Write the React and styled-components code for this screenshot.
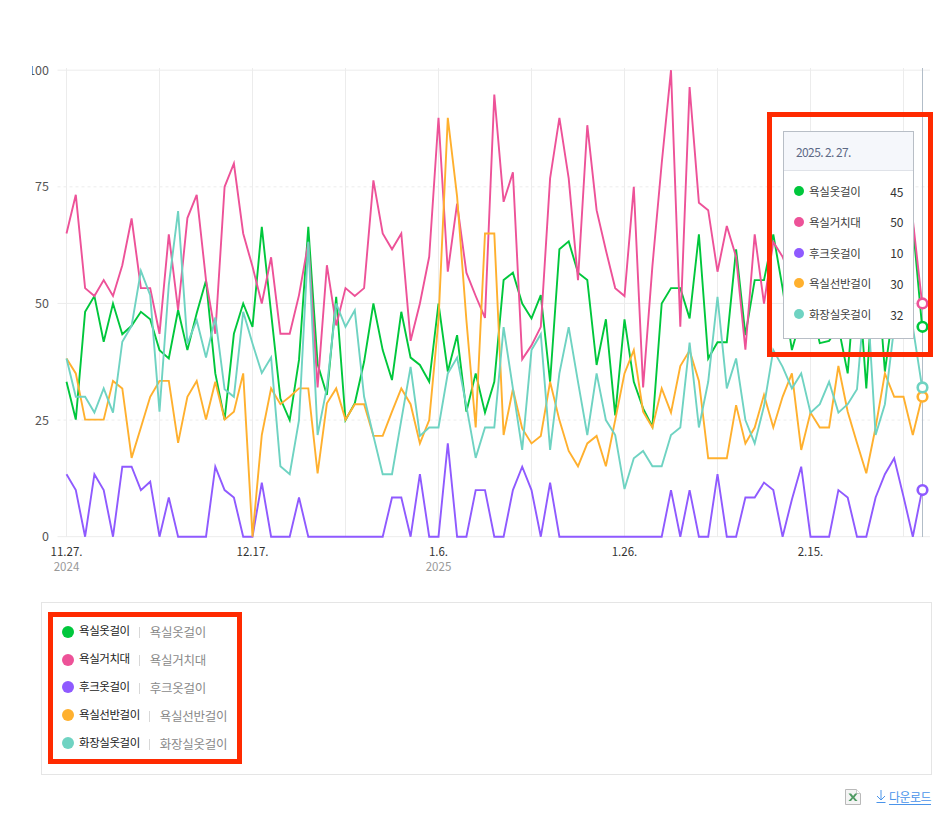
import React from 'react';
import styled, { createGlobalStyle } from 'styled-components';

const FONT = `"Noto Sans CJK KR", "Noto Sans", sans-serif`;

const GlobalStyle = createGlobalStyle`
  html, body {
    margin: 0;
    padding: 0;
    background: #ffffff;
    font-family: ${FONT};
  }
`;

const series = [
  {
    name: '욕실옷걸이',
    color: '#00c73c',
    value: 45,
    data: [
      33.2, 25.1, 48.2, 51.6, 41.8, 50, 43.4, 45.2, 48.2, 46.6,
      40, 38.2, 48.6, 40, 47.9, 54.9, 35, 25.1, 43.5, 50,
      45, 66.4, 48, 29.6, 25, 37.9, 66.4, 37, 30.4, 51.4,
      25, 28.6, 37.5, 50, 40, 33.6, 48.2, 38.4, 36.8, 33.2,
      50, 35.4, 43.2, 26.8, 35, 26.6, 33.2, 55, 56.6, 50,
      46.8, 51.8, 33.2, 61.6, 63.3, 56.6, 55, 36.8, 46.6, 26,
      46.6, 33.2, 27.5, 23.6, 50, 53.3, 53.3, 46.8, 64.8, 38.2,
      41.7, 41.7, 61.6, 43.2, 55, 55, 64.8, 53.3, 40, 47,
      50, 41.5, 42, 45, 35, 60, 31.8, 62, 35.4, 50,
      56, 67, 45,
    ],
  },
  {
    name: '욕실거치대',
    color: '#ed5298',
    value: 50,
    data: [
      65, 73.3, 53.3, 51.6, 55, 51.6, 58.2, 68.2, 53.3, 53.3,
      43.5, 64.8, 48.6, 68.3, 73.3, 55, 43.5, 75, 80, 65,
      57.9, 50, 59.9, 43.5, 43.5, 51.8, 63, 32, 58.2, 45.3,
      53.3, 51.6, 53.3, 76.4, 65, 61.6, 65, 42, 50, 60,
      89.8, 56.8, 71.4, 56.6, 51.6, 46.9, 94.8, 71.8, 78.1, 38,
      41, 45, 76.8, 89.8, 76.8, 55, 88.2, 70, 61.4, 53.3,
      51.6, 75, 32, 58, 80, 100, 45, 96.4, 71.6, 70,
      56.8, 66.6, 60, 40.1, 64.8, 50, 63.2, 60, 55, 52,
      48, 50, 55, 58, 55, 50, 48, 52, 55, 50,
      60, 68, 50,
    ],
  },
  {
    name: '후크옷걸이',
    color: '#8f5aff',
    value: 10,
    data: [
      13.4, 10, 0, 13.4, 10, 0, 15, 15, 10, 11.8,
      0, 8.4, 0, 0, 0, 0, 15, 10, 8.4, 0,
      0, 11.6, 0, 0, 0, 8.4, 0, 0, 0, 0,
      0, 0, 0, 0, 0, 8.4, 8.4, 0, 13.4, 0,
      0, 20, 0, 0, 10, 10, 0, 0, 10, 15,
      10, 0, 11.6, 0, 0, 0, 0, 0, 0, 0,
      0, 0, 0, 0, 0, 10, 0, 10, 0, 0,
      13.4, 0, 0, 8.4, 8.4, 11.6, 10, 0, 8, 15,
      0, 0, 0, 10, 8.4, 0, 0, 8.4, 13.4, 16.8,
      8.6, 0, 10,
    ],
  },
  {
    name: '욕실선반걸이',
    color: '#ffb02e',
    value: 30,
    data: [
      38.2, 35, 25.1, 25.1, 25.1, 33.4, 31.8, 16.9, 23.4, 30,
      33.4, 33.4, 20.1, 30, 33.4, 25.1, 33.2, 25.1, 26.8, 35,
      0, 21.8, 31.8, 28.4, 30, 31.8, 31.8, 13.6, 28.6, 31.8,
      25.1, 28.4, 28.4, 21.6, 21.6, 26.8, 31.8, 28.4, 20, 25,
      46.4, 89.8, 72.9, 46.4, 23.4, 65, 65, 21.8, 31.6, 23.2,
      20, 21.6, 33.2, 25, 18.4, 15.1, 20, 21.6, 15.1, 25,
      35, 40, 26.8, 23.4, 31.8, 26.6, 36.6, 39.9, 33.4, 16.8,
      16.8, 16.8, 28.2, 20, 23.4, 30.4, 23.4, 30, 35, 18.6,
      26.6, 23.4, 23.4, 36.6, 26.8, 20.1, 13.6, 23.4, 35, 30,
      30, 21.8, 30,
    ],
  },
  {
    name: '화장실옷걸이',
    color: '#6fd3c2',
    value: 32,
    data: [
      38.2, 30, 30, 26.6, 31.8, 26.6, 41.8, 45.2, 57, 51.8,
      26.8, 54, 69.8, 41.4, 46.4, 38.4, 47, 31.6, 30, 48.2,
      41.4, 35.1, 38.4, 15.1, 13.4, 25, 63.2, 21.8, 32, 50,
      45, 48.5, 30, 21.6, 13.4, 13.4, 25, 36.4, 21.6, 23.4,
      23.4, 35, 38.4, 28, 16.9, 23.4, 23.4, 44.9, 31.8, 18.6,
      40, 43.4, 18.6, 35, 44.9, 33.2, 21.8, 35, 25, 21.8,
      10.2, 16.8, 18.4, 15.1, 15.1, 21.8, 23.4, 41.6, 23.4, 33.2,
      51.4, 31.8, 38.2, 25, 20, 28, 40, 36.4, 31.8, 35,
      26.6, 28.4, 33.2, 26.6, 28.4, 31.6, 55, 21.8, 28.4, 45,
      50, 45, 32,
    ],
  },
];

const xOf = (i) => 66.5 + i * 9.3;
const yOf = (v) => 536.7 - v * 4.665;

const yTicks = [
  { v: 100, dashed: false },
  { v: 75, dashed: true },
  { v: 50, dashed: false },
  { v: 25, dashed: true },
  { v: 0, dashed: false },
];

const xTicks = [
  { i: 0, label: '11.27.', year: '2024' },
  { i: 20, label: '12.17.' },
  { i: 40, label: '1.6.', year: '2025' },
  { i: 60, label: '1.26.' },
  { i: 80, label: '2.15.' },
];

const Page = styled.div`
  width: 952px;
  height: 838px;
  overflow: hidden;
  background: #ffffff;
`;

const ChartArea = styled.div`
  position: relative;
  padding-top: 60px;
  height: 520px;
`;

const ChartSvg = styled.svg`
  display: block;
  margin-left: 32px;
  font-family: ${FONT};
`;

const AxisValue = styled.text`
  font-size: 12.5px;
  fill: #555555;
  text-anchor: end;
  font-weight: 400;
`;

const AxisDate = styled.text`
  font-size: 11.5px;
  fill: #333333;
  text-anchor: middle;
`;

const AxisYear = styled.text`
  font-size: 11.5px;
  fill: #999999;
  text-anchor: middle;
`;

const Highlight = styled.div`
  position: absolute;
  left: 767px;
  top: 112px;
  width: 166px;
  height: 245px;
  box-sizing: border-box;
  border: 5px solid #ff2a00;
`;

const Tooltip = styled.div`
  position: absolute;
  left: 783px;
  top: 131px;
  width: 131px;
  height: 208px;
  box-sizing: border-box;
  border: 1px solid #b8bec6;
  background: #ffffff;
`;

const TooltipHead = styled.div`
  height: 39px;
  box-sizing: border-box;
  padding-left: 12px;
  display: flex;
  align-items: center;
  background: #f5f7fb;
  border-bottom: 1px solid #dfe2e8;
  color: #5d6985;
  font-size: 12px;
  letter-spacing: -0.6px;
`;

const TooltipBody = styled.div`
  padding-top: 5px;
`;

const TooltipRow = styled.div`
  display: flex;
  align-items: center;
  height: 31px;
  padding: 0 10px 0 10px;
  font-size: 11.5px;
  color: #404040;
  margin-top: -0.3px;
`;

const TooltipName = styled.span`
  margin-left: 5px;
  flex: 1;
  letter-spacing: -0.25px;
`;

const TooltipValue = styled.span`
  color: #333333;
  font-size: 12px;
  letter-spacing: -0.3px;
`;

const Dot = styled.i`
  display: block;
  flex: none;
  width: ${(p) => p.$size}px;
  height: ${(p) => p.$size}px;
  border-radius: 50%;
  background: ${(p) => p.$color};
`;

const LegendBox = styled.div`
  width: 891px;
  height: 173px;
  box-sizing: border-box;
  margin: 22px 0 0 41px;
  padding: 9px 0 0 6px;
  border: 1px solid #e5e5e5;
`;

const LegendHighlight = styled.div`
  width: 194px;
  height: 152px;
  box-sizing: border-box;
  padding: 1px 0 0 9px;
  border: 5px solid #ff2a00;
`;

const LegendRow = styled.div`
  display: flex;
  align-items: center;
  height: 27.8px;
`;

const LegendName = styled.span`
  margin: -3px 0 0 5px;
  font-size: 11.5px;
  font-weight: 400;
  letter-spacing: -0.45px;
  color: #222222;
`;

const LegendSep = styled.span`
  width: 1px;
  height: 11px;
  margin: 2px 10px 0 9px;
  background: #d8d8d8;
`;

const LegendAlias = styled.span`
  font-size: 12.5px;
  letter-spacing: -0.25px;
  color: #8a8a8a;
`;

const Footer = styled.div`
  display: flex;
  align-items: center;
  justify-content: flex-end;
  margin-top: 13px;
  padding-right: 21px;
`;

const ExcelButton = styled.svg`
  display: block;
  margin-right: 15px;
`;

const DownloadLink = styled.a`
  display: inline-flex;
  align-items: center;
  gap: 3px;
  color: #4a94ea;
  font-size: 12px;
  letter-spacing: -0.55px;
  text-decoration: underline;
  text-underline-offset: 2px;
`;

const Chart = () => (
  <ChartSvg width="900" height="520" viewBox="32 60 900 520">
    {yTicks.map((t) => (
      <g key={t.v}>
        <line
          x1="57.5"
          x2="930"
          y1={yOf(t.v)}
          y2={yOf(t.v)}
          stroke="#ececec"
          strokeWidth="1"
          strokeDasharray={t.dashed ? '3 3' : undefined}
        />
        <AxisValue x="49" y={yOf(t.v) + 4.5}>{t.v}</AxisValue>
      </g>
    ))}
    {Array.from({ length: 10 }, (_, n) => (
      <line
        key={n}
        x1={66.5 + n * 93}
        x2={66.5 + n * 93}
        y1="68"
        y2="537"
        stroke="#ececec"
        strokeWidth="1"
      />
    ))}
    {xTicks.map((t) => (
      <g key={t.label}>
        <AxisDate x={xOf(t.i)} y="556">{t.label}</AxisDate>
        {t.year && <AxisYear x={xOf(t.i)} y="571">{t.year}</AxisYear>}
      </g>
    ))}
    <line x1="922.5" x2="922.5" y1="68" y2="537" stroke="#b2bdc8" strokeWidth="1" />
    {series.map((s) => (
      <polyline
        key={s.name}
        fill="none"
        stroke={s.color}
        strokeWidth="1.9"
        strokeLinejoin="miter"
        points={s.data.map((v, i) => `${xOf(i).toFixed(1)},${yOf(v).toFixed(1)}`).join(' ')}
      />
    ))}
    {series.map((s) => (
      <circle
        key={s.name}
        cx="922.5"
        cy={yOf(s.value)}
        r="4.8"
        fill="#ffffff"
        stroke={s.color}
        strokeWidth="2.6"
      />
    ))}
  </ChartSvg>
);

const ExcelIcon = () => (
  <ExcelButton width="16" height="16" viewBox="0 0 16 16">
    <path d="M.5.5h11l4 4v11H.5z" fill="#f4f4f4" stroke="#b9b9b9" />
    <path d="M11.5.5v4h4" fill="#ffffff" stroke="#c9c9c9" />
    <path d="M3.5 4.5h2.6l2 2.6 2-2.6h2.4L9.4 8.4l3.2 3.6H10L8 9.6 6 12H3.4l3.3-3.6z" fill="#4f9a63" />
  </ExcelButton>
);

const DownArrow = () => (
  <svg width="10" height="13" viewBox="0 0 10 13">
    <path d="M5 0v10M1 6l4 4 4-4M.5 12.5h9" fill="none" stroke="#4a94ea" strokeWidth="1" />
  </svg>
);

const App = () => (
  <Page>
    <GlobalStyle />
    <ChartArea>
      <Chart />
      <Highlight />
      <Tooltip>
        <TooltipHead>2025. 2. 27.</TooltipHead>
        <TooltipBody>
          {series.map((s) => (
            <TooltipRow key={s.name}>
              <Dot $size={10} $color={s.color} />
              <TooltipName>{s.name}</TooltipName>
              <TooltipValue>{s.value}</TooltipValue>
            </TooltipRow>
          ))}
        </TooltipBody>
      </Tooltip>
    </ChartArea>
    <LegendBox>
      <LegendHighlight>
        {series.map((s) => (
          <LegendRow key={s.name}>
            <Dot $size={12} $color={s.color} />
            <LegendName>{s.name}</LegendName>
            <LegendSep />
            <LegendAlias>{s.name}</LegendAlias>
          </LegendRow>
        ))}
      </LegendHighlight>
    </LegendBox>
    <Footer>
      <ExcelIcon />
      <DownloadLink>
        <DownArrow />
        다운로드
      </DownloadLink>
    </Footer>
  </Page>
);

export default App;
